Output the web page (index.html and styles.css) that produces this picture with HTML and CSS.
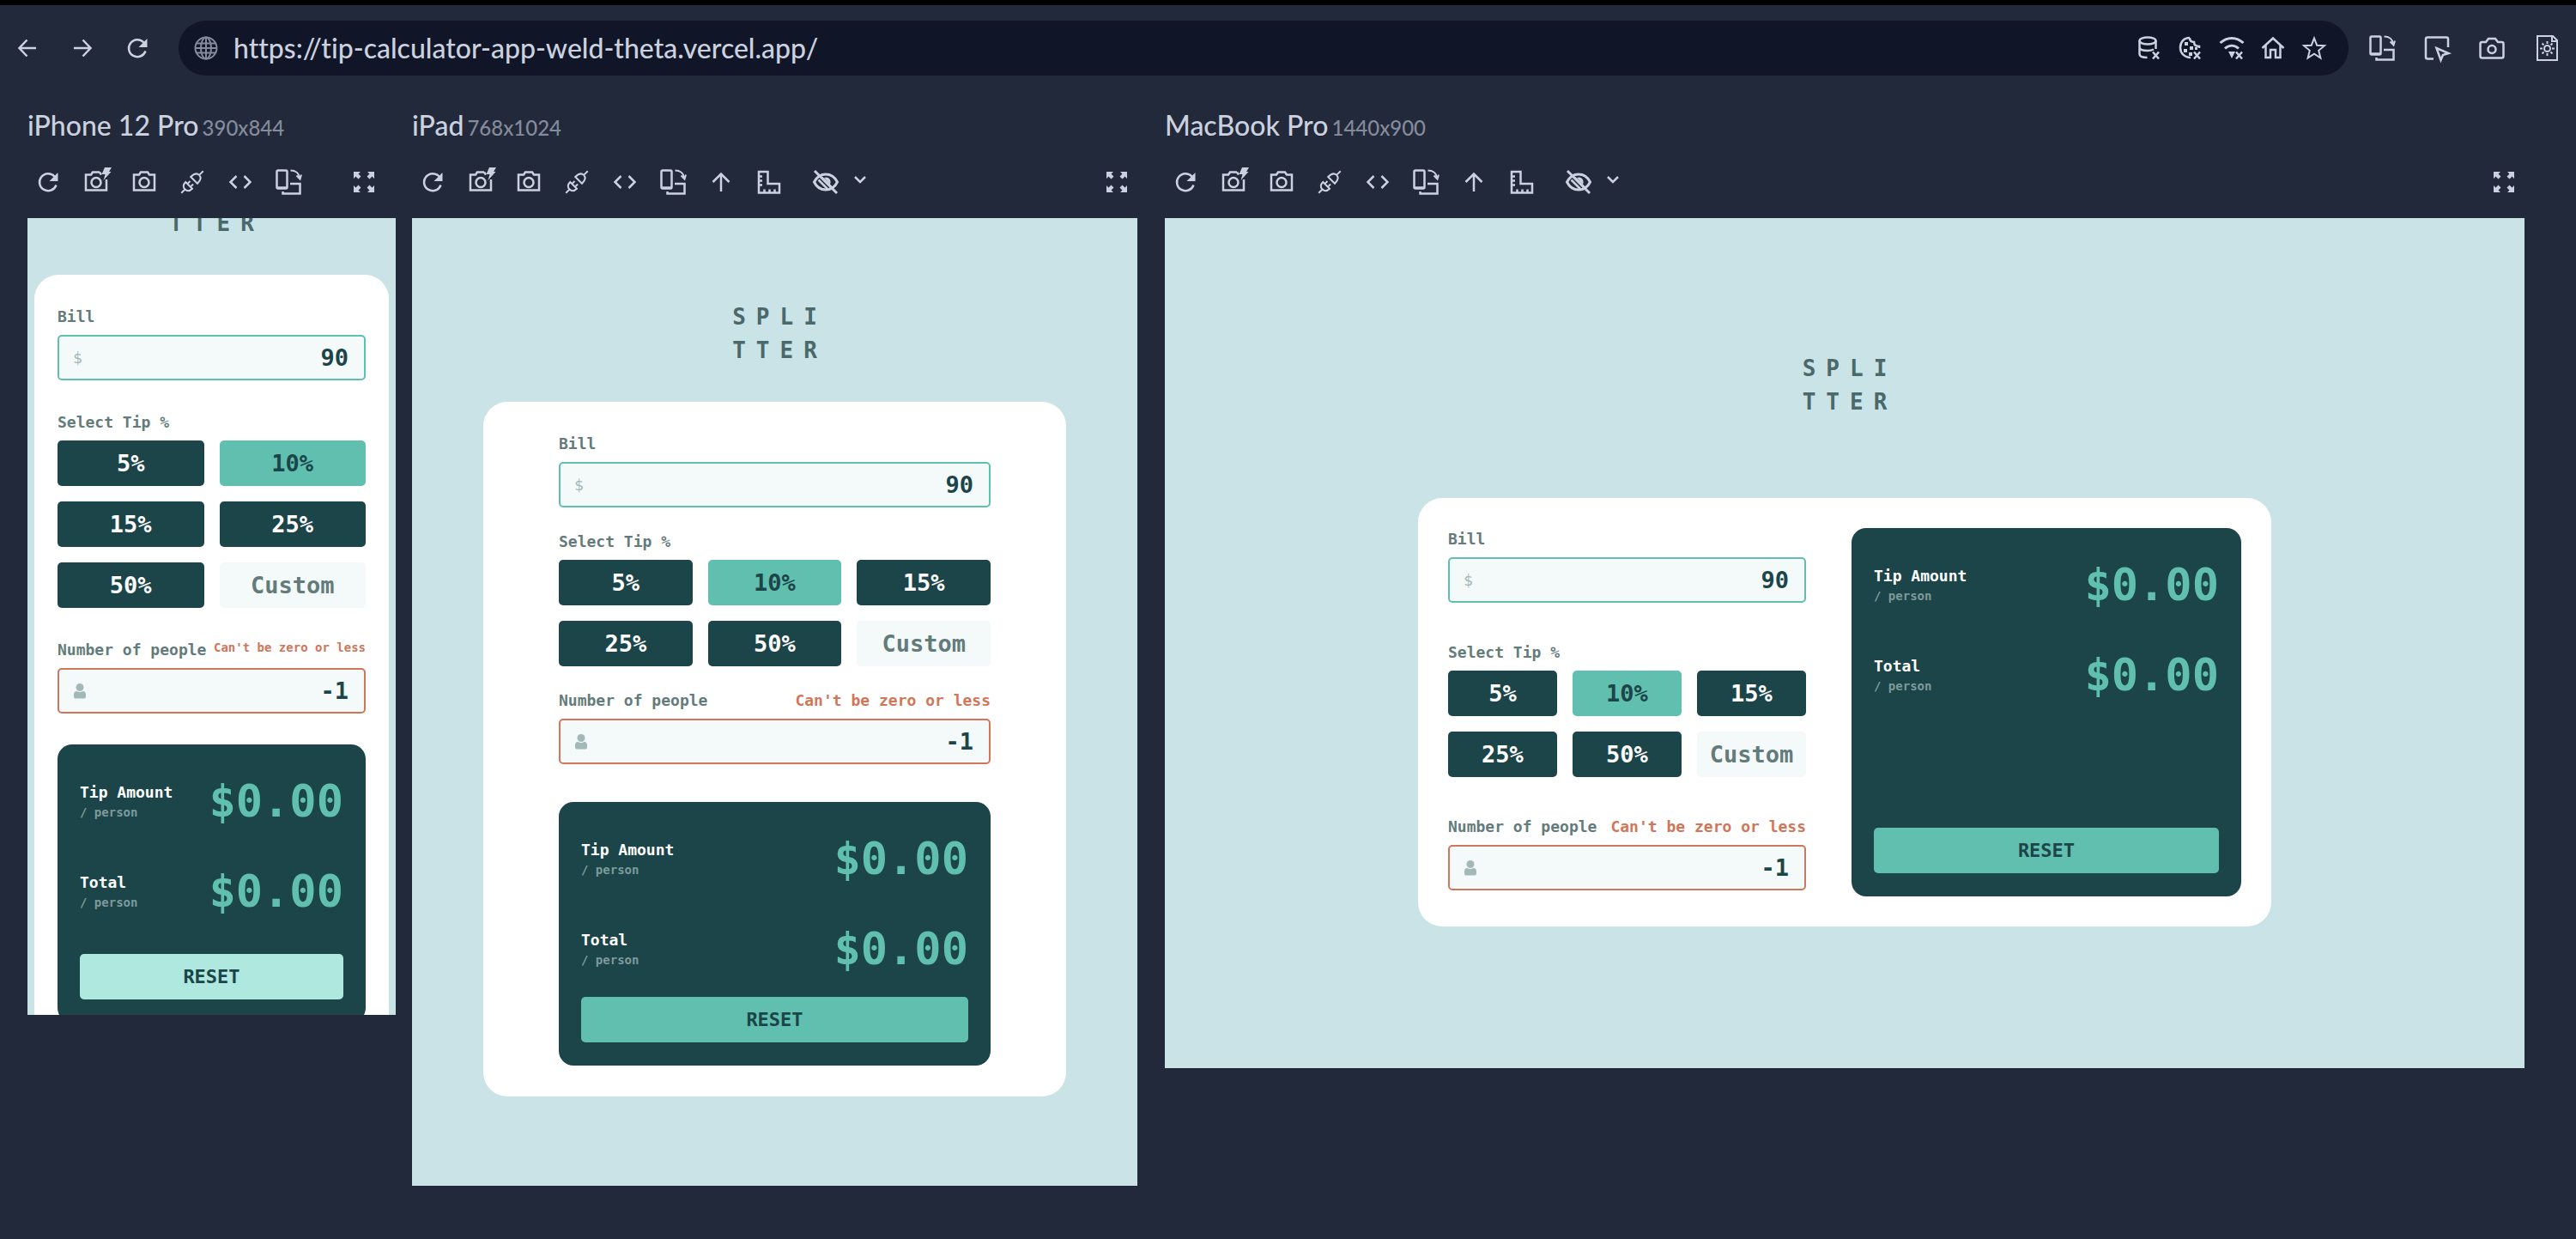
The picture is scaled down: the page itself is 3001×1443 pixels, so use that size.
FILE: index.html
```html
<!DOCTYPE html>
<html lang="en">
<head>
<meta charset="utf-8">
<meta name="viewport" content="width=device-width, initial-scale=1">
<title>Responsive preview</title>
<link rel="stylesheet" href="styles.css">
</head>
<body>
<svg class="sprite" aria-hidden="true">
  <symbol id="i-back" viewBox="0 0 32 32"><path d="M26 16H7M15.500 6.500 6.500 16l9 9.500"/></symbol>
  <symbol id="i-forward" viewBox="0 0 32 32"><path d="M6 16h19M16.500 6.500l9 9.500-9 9.500"/></symbol>
  <symbol id="i-up" viewBox="0 0 32 32"><path d="M16 27V7M6.500 16 16 6.500 25.500 16"/></symbol>
  <symbol id="i-refresh" viewBox="0 0 32 32"><path d="M25.500 19.500A10 10 0 1 1 23.500 9.500"/><path class="solid" d="M27.500 5v10h-10z"/></symbol>
  <symbol id="i-camera" viewBox="0 0 32 32"><path d="M4 7.500h6l2-3h8l2 3h6v18H4z"/><circle cx="16" cy="16.500" r="5.500"/></symbol>
  <symbol id="i-flash" viewBox="0 0 32 32"><path d="M20 4.500h-8l-2 3H4v18h24V13M20 4.500l2 3"/><circle cx="16" cy="16.500" r="5.500"/><path class="solid" d="M26-1h8l-3 5h2.500l-9 10 2-7h-4z"/></symbol>
  <symbol id="i-plug" viewBox="0 0 32 32"><g class="thin" transform="rotate(-45 16 16)"><path d="M-2 16h6M10.500 10.500c-4.500 0-6.500 2-6.500 5.500s2 5.500 6.500 5.500zM10.500 13.500H15M10.500 18.500H15M19 10.500v11c5 0 8.500-2 8.500-5.500s-3.500-5.500-8.500-5.500zM27.500 16H34"/></g></symbol>
  <symbol id="i-code" viewBox="0 0 32 32"><path d="M11.500 9 4.500 16l7 7M20.500 9l7 7-7 7"/></symbol>
  <symbol id="i-rotate" viewBox="0 0 32 32"><rect x="2.500" y="2.500" width="12" height="21" rx="1.500"/><path d="M2.500 22.500h12M18 18h11.500v11.500H9.500V27"/><path class="thin" d="M18.500 2.500c5.500 0 10 3 10.500 9M25.500 8.500l4 4 1.500-5"/></symbol>
  <symbol id="i-ruler" viewBox="0 0 32 32"><path d="M4 4h10.500v14H28v10.500H4zM4 9.500h4M4 14.500h4M4 19.500h4M10.500 28.500v-4M16.500 28.500v-4M22.500 28.500v-4"/></symbol>
  <symbol id="i-eye" viewBox="0 0 32 32"><path class="bold" d="M2.500 16c3-6 8-9 13.500-9s10.500 3 13.500 9c-3 6-8 9-13.500 9S5.500 22 2.500 16z"/><path class="solid" d="M14 11c5-2 9 2 7 8z"/><path d="M7.500 13.500 18 24M11 10.500l12 12"/><path class="bold" d="M3 3l26 26"/></symbol>
  <symbol id="i-chevron" viewBox="0 0 16 16"><path d="M2 2l6 6 6-6"/></symbol>
  <symbol id="i-expand" viewBox="0 0 32 32"><path class="solid" d="M4 4h8L9.500 6.500l3 3-3 3-3-3L4 12zM28 4h-8l2.500 2.500-3 3 3 3 3-3L28 12zM4 28h8l-2.500-2.500 3-3-3-3-3 3L4 20zM28 28h-8l2.500-2.500-3-3 3-3 3 3L28 20z"/></symbol>
  <symbol id="i-globe" viewBox="0 0 32 32"><g class="thin"><circle cx="16" cy="16" r="12.500"/><ellipse cx="16" cy="16" rx="6" ry="12.500"/><path d="M16 3.500v25M3.500 16h25M5 10.500h22M5 21.500h22"/></g></symbol>
  <symbol id="i-storage" viewBox="0 0 32 32"><ellipse cx="14" cy="7.500" rx="9.500" ry="4"/><path d="M4.500 7.500V23c0 2.500 4 4 9 4M23.500 7.500V17M4.500 15c0 2.500 4 4 9.500 4 3 0 5-.5 7-1.500"/><path d="M20 20.500l7 8M27 20.500l-7 8"/></symbol>
  <symbol id="i-cookie" viewBox="0 0 32 32"><path d="M15 4C8 4 4 9 4 15.500S9 27 16 27M15 4c0 4 2 5 5 5 0 3 2 5 6 5v2"/><path class="solid" d="M9 9h4v4H9zM8 17h4v4H8zM15 14h4v4h-4zM14 21h4v4h-4zM21 15h3v3h-3z"/><path d="M20 20.500l7 8M27 20.500l-7 8"/></symbol>
  <symbol id="i-wifi" viewBox="0 0 32 32"><path class="bold" d="M2.500 10c8-7.500 19-7.500 27 0M8 16.500c5-4.500 11-4.500 16 0"/><path class="solid" d="M12 20h8l-4 8z"/><path d="M21 20.500l7 8M28 20.500l-7 8"/></symbol>
  <symbol id="i-home" viewBox="0 0 32 32"><path d="M3.500 16 16 4.500 28.500 16M7.500 13v14H13v-9h6v9h5.500V13"/></symbol>
  <symbol id="i-star" viewBox="0 0 32 32"><path class="thin" d="M16 4.500l3.200 8.200 8.800.5-6.800 5.600 2.200 8.700-7.400-4.800-7.400 4.800 2.200-8.700L4 13.200l8.800-.5z"/></symbol>
  <symbol id="i-inspect" viewBox="0 0 32 32"><path d="M12 28.500H5c-1.500 0-2-.5-2-2V5.500c0-1.500.5-2 2-2h22c1.500 0 2 .5 2 2V15M15.500 16l5 14 2.500-6 6.500-2z"/></symbol>
  <symbol id="i-photo" viewBox="0 0 32 32"><path d="M4.500 9H9l3-4h8l3 4h4.500c1.500 0 2 .5 2 2v14.500c0 1.500-.5 2-2 2h-23c-1.500 0-2-.5-2-2V11c0-1.500.5-2 2-2z"/><circle cx="16" cy="17.500" r="4.500"/></symbol>
  <symbol id="i-report" viewBox="0 0 32 32"><g class="thin"><path d="M5 2h18l5 5v23H5zM22 2v6h6"/><circle cx="16.500" cy="16.500" r="3.500"/><path d="M16.500 8v3M16.500 22v3M8 16.500h3M22 16.500h3M10.500 10.500l2 2M20.500 20.500l2 2M10.500 22.500l2-2M20.500 12.500l2-2"/></g></symbol>
  <symbol id="i-person" viewBox="0 0 16 18"><circle class="solid" cx="8" cy="4.500" r="4.500"/><path class="solid" d="M1 15c-.5-5 1.500-6 3.500-6 2 1.500 5 1.500 7 0 2 0 4 1 3.500 6 0 2-1 2.500-2.500 2.500h-9C2 17.500 1 17 1 15z"/></symbol>
</svg>

<header class="browser-bar">
  <nav class="bar-group" aria-label="History">
    <button class="bar-button" aria-label="Back"><svg class="icon"><use href="#i-back"/></svg></button>
    <button class="bar-button" aria-label="Forward"><svg class="icon"><use href="#i-forward"/></svg></button>
    <button class="bar-button" aria-label="Reload"><svg class="icon"><use href="#i-refresh"/></svg></button>
  </nav>
  <div class="address">
    <svg class="icon address-globe"><use href="#i-globe"/></svg>
    <input class="address-input" type="text" aria-label="Address" value="https://tip-calculator-app-weld-theta.vercel.app/">
    <div class="address-actions">
      <button class="plain-button" aria-label="Clear storage"><svg class="icon"><use href="#i-storage"/></svg></button>
      <button class="plain-button" aria-label="Clear cookies"><svg class="icon"><use href="#i-cookie"/></svg></button>
      <button class="plain-button" aria-label="Clear cache"><svg class="icon"><use href="#i-wifi"/></svg></button>
      <button class="plain-button" aria-label="Home"><svg class="icon"><use href="#i-home"/></svg></button>
      <button class="plain-button" aria-label="Bookmark"><svg class="icon"><use href="#i-star"/></svg></button>
    </div>
  </div>
  <div class="bar-group">
    <button class="bar-button" aria-label="Rotate devices"><svg class="icon"><use href="#i-rotate"/></svg></button>
    <button class="bar-button" aria-label="Inspect"><svg class="icon"><use href="#i-inspect"/></svg></button>
    <button class="bar-button" aria-label="Screenshot all"><svg class="icon"><use href="#i-photo"/></svg></button>
    <button class="bar-button" aria-label="Settings"><svg class="icon"><use href="#i-report"/></svg></button>
  </div>
</header>

<main class="devices">
  <section class="device device-phone">
    <h2 class="device-name">iPhone 12 Pro <span class="device-size">390x844</span></h2>
    <div class="toolbar">
      <button class="tool" aria-label="Refresh"><svg class="icon"><use href="#i-refresh"/></svg></button>
      <button class="tool" aria-label="Quick screenshot"><svg class="icon"><use href="#i-flash"/></svg></button>
      <button class="tool" aria-label="Full screenshot"><svg class="icon"><use href="#i-camera"/></svg></button>
      <button class="tool" aria-label="Disable sync"><svg class="icon"><use href="#i-plug"/></svg></button>
      <button class="tool" aria-label="Devtools"><svg class="icon"><use href="#i-code"/></svg></button>
      <button class="tool" aria-label="Rotate"><svg class="icon"><use href="#i-rotate"/></svg></button>
      <button class="tool tool-end" aria-label="Expand"><svg class="icon"><use href="#i-expand"/></svg></button>
    </div>
    <div class="screen">
      <div class="app">
        <h1 class="logo">SPLI<br>TTER</h1>
        <form class="card">
          <div class="fields">
            <div class="field">
              <label class="label" for="bill-phone">Bill</label>
              <div class="box"><span class="currency">$</span><input class="value" id="bill-phone" type="text" value="90"></div>
            </div>
            <fieldset class="field tips">
              <legend class="label">Select Tip %</legend>
              <div class="tip-grid">
                <button class="tip" type="button">5%</button>
                <button class="tip tip-active" type="button">10%</button>
                <button class="tip" type="button">15%</button>
                <button class="tip" type="button">25%</button>
                <button class="tip" type="button">50%</button>
                <input class="tip tip-custom" type="text" placeholder="Custom" aria-label="Custom tip">
              </div>
            </fieldset>
            <div class="field">
              <div class="label-row"><label class="label" for="people-phone">Number of people</label><span class="error">Can't be zero or less</span></div>
              <div class="box box-error"><svg class="person"><use href="#i-person"/></svg><input class="value" id="people-phone" type="text" value="-1"></div>
            </div>
          </div>
          <div class="result">
            <div class="row"><div><div class="row-name">Tip Amount</div><div class="row-unit">/ person</div></div><output class="amount">$0.00</output></div>
            <div class="row"><div><div class="row-name">Total</div><div class="row-unit">/ person</div></div><output class="amount">$0.00</output></div>
            <button class="reset" type="button">RESET</button>
          </div>
        </form>
      </div>
    </div>
  </section>

  <section class="device device-tablet">
    <h2 class="device-name">iPad <span class="device-size">768x1024</span></h2>
    <div class="toolbar">
      <button class="tool" aria-label="Refresh"><svg class="icon"><use href="#i-refresh"/></svg></button>
      <button class="tool" aria-label="Quick screenshot"><svg class="icon"><use href="#i-flash"/></svg></button>
      <button class="tool" aria-label="Full screenshot"><svg class="icon"><use href="#i-camera"/></svg></button>
      <button class="tool" aria-label="Disable sync"><svg class="icon"><use href="#i-plug"/></svg></button>
      <button class="tool" aria-label="Devtools"><svg class="icon"><use href="#i-code"/></svg></button>
      <button class="tool" aria-label="Rotate"><svg class="icon"><use href="#i-rotate"/></svg></button>
      <button class="tool" aria-label="Scroll to top"><svg class="icon"><use href="#i-up"/></svg></button>
      <button class="tool" aria-label="Rulers"><svg class="icon"><use href="#i-ruler"/></svg></button>
      <button class="tool tool-menu" aria-label="Simulate vision"><svg class="icon"><use href="#i-eye"/></svg><svg class="chevron"><use href="#i-chevron"/></svg></button>
      <button class="tool tool-end" aria-label="Expand"><svg class="icon"><use href="#i-expand"/></svg></button>
    </div>
    <div class="screen">
      <div class="app">
        <h1 class="logo">SPLI<br>TTER</h1>
        <form class="card">
          <div class="fields">
            <div class="field">
              <label class="label" for="bill-tablet">Bill</label>
              <div class="box"><span class="currency">$</span><input class="value" id="bill-tablet" type="text" value="90"></div>
            </div>
            <fieldset class="field tips">
              <legend class="label">Select Tip %</legend>
              <div class="tip-grid">
                <button class="tip" type="button">5%</button>
                <button class="tip tip-active" type="button">10%</button>
                <button class="tip" type="button">15%</button>
                <button class="tip" type="button">25%</button>
                <button class="tip" type="button">50%</button>
                <input class="tip tip-custom" type="text" placeholder="Custom" aria-label="Custom tip">
              </div>
            </fieldset>
            <div class="field">
              <div class="label-row"><label class="label" for="people-tablet">Number of people</label><span class="error">Can't be zero or less</span></div>
              <div class="box box-error"><svg class="person"><use href="#i-person"/></svg><input class="value" id="people-tablet" type="text" value="-1"></div>
            </div>
          </div>
          <div class="result">
            <div class="row"><div><div class="row-name">Tip Amount</div><div class="row-unit">/ person</div></div><output class="amount">$0.00</output></div>
            <div class="row"><div><div class="row-name">Total</div><div class="row-unit">/ person</div></div><output class="amount">$0.00</output></div>
            <button class="reset" type="button">RESET</button>
          </div>
        </form>
      </div>
    </div>
  </section>

  <section class="device device-laptop">
    <h2 class="device-name">MacBook Pro <span class="device-size">1440x900</span></h2>
    <div class="toolbar">
      <button class="tool" aria-label="Refresh"><svg class="icon"><use href="#i-refresh"/></svg></button>
      <button class="tool" aria-label="Quick screenshot"><svg class="icon"><use href="#i-flash"/></svg></button>
      <button class="tool" aria-label="Full screenshot"><svg class="icon"><use href="#i-camera"/></svg></button>
      <button class="tool" aria-label="Disable sync"><svg class="icon"><use href="#i-plug"/></svg></button>
      <button class="tool" aria-label="Devtools"><svg class="icon"><use href="#i-code"/></svg></button>
      <button class="tool" aria-label="Rotate"><svg class="icon"><use href="#i-rotate"/></svg></button>
      <button class="tool" aria-label="Scroll to top"><svg class="icon"><use href="#i-up"/></svg></button>
      <button class="tool" aria-label="Rulers"><svg class="icon"><use href="#i-ruler"/></svg></button>
      <button class="tool tool-menu" aria-label="Simulate vision"><svg class="icon"><use href="#i-eye"/></svg><svg class="chevron"><use href="#i-chevron"/></svg></button>
      <button class="tool tool-end" aria-label="Expand"><svg class="icon"><use href="#i-expand"/></svg></button>
    </div>
    <div class="screen">
      <div class="app">
        <h1 class="logo">SPLI<br>TTER</h1>
        <form class="card">
          <div class="fields">
            <div class="field">
              <label class="label" for="bill-laptop">Bill</label>
              <div class="box"><span class="currency">$</span><input class="value" id="bill-laptop" type="text" value="90"></div>
            </div>
            <fieldset class="field tips">
              <legend class="label">Select Tip %</legend>
              <div class="tip-grid">
                <button class="tip" type="button">5%</button>
                <button class="tip tip-active" type="button">10%</button>
                <button class="tip" type="button">15%</button>
                <button class="tip" type="button">25%</button>
                <button class="tip" type="button">50%</button>
                <input class="tip tip-custom" type="text" placeholder="Custom" aria-label="Custom tip">
              </div>
            </fieldset>
            <div class="field">
              <div class="label-row"><label class="label" for="people-laptop">Number of people</label><span class="error">Can't be zero or less</span></div>
              <div class="box box-error"><svg class="person"><use href="#i-person"/></svg><input class="value" id="people-laptop" type="text" value="-1"></div>
            </div>
          </div>
          <div class="result">
            <div class="row"><div><div class="row-name">Tip Amount</div><div class="row-unit">/ person</div></div><output class="amount">$0.00</output></div>
            <div class="row"><div><div class="row-name">Total</div><div class="row-unit">/ person</div></div><output class="amount">$0.00</output></div>
            <button class="reset" type="button">RESET</button>
          </div>
        </form>
      </div>
    </div>
  </section>
</main>
</body>
</html>
```
FILE: styles.css
```css
:root {
  --page: #22293b;
  --ink: #cbd1df;
  --muted: #848b9b;
  --dark: #1c4549;
  --teal: #60bfae;
  --mint: #aee8df;
  --label: #637c7b;
  --error: #d0765a;
  --field: #f4f9fa;
  --screen: #cae3e6;
}

* { box-sizing: border-box; }

body {
  margin: 0;
  min-height: 100vh;
  border-top: 6px solid #000;
  background: var(--page);
  color: var(--ink);
  font-family: Lato, sans-serif;
  font-weight: 500;
}

button, input, output { font: inherit; color: inherit; }
button { padding: 0; border: 0; background: none; cursor: pointer; }
input { min-width: 0; border: 0; outline: 0; background: none; }

.sprite { display: none; }

.icon {
  flex: none;
  width: 32px;
  height: 32px;
  overflow: visible;
}
.icon, .chevron {
  fill: none;
  stroke: currentColor;
  stroke-width: 2.5;
}
symbol { overflow: visible; }
.thin { stroke-width: 2; }
.bold { stroke-width: 3; }
.solid { fill: currentColor; stroke: none; }

/* Browser bar */
.browser-bar {
  display: flex;
  align-items: center;
  padding: 18px 2px 18px 0;
}
.bar-group { display: flex; flex: none; }
.bar-button {
  display: flex;
  align-items: center;
  justify-content: center;
  width: 64px;
  height: 64px;
}
.address {
  display: flex;
  flex: 1;
  align-items: center;
  height: 64px;
  margin: 0 7px 0 16px;
  padding: 0 24px 0 16px;
  border-radius: 32px;
  background: #101628;
}
.address-globe { color: var(--muted); }
.address-input {
  flex: 1;
  padding: 0 16px;
  font-size: 32px;
  line-height: 40px;
  font-variant-ligatures: none;
}
.address-actions { display: flex; gap: 16px; }
.plain-button { display: flex; }

/* Device previews */
.devices {
  display: flex;
  align-items: flex-start;
  padding: 20px 60px 60px 32px;
}
.device { min-width: 0; }
.device-phone { flex: 429 1 0; margin-right: 19px; }
.device-tablet { flex: 845 1 0; margin-right: 32px; }
.device-laptop { flex: 1584 1 0; }
.device-name {
  margin: 0;
  font-size: 32px;
  font-weight: 500;
  line-height: 40px;
  white-space: nowrap;
}
.device-size {
  margin-left: -4px;
  color: var(--muted);
  font-size: 24px;
}
.toolbar {
  display: flex;
  gap: 8px;
  margin: 19px 0 18px;
}
.tool {
  display: flex;
  flex: none;
  align-items: center;
  justify-content: center;
  width: 48px;
  height: 48px;
}
.tool-menu { gap: 16px; width: 100px; }
.chevron { width: 16px; height: 16px; }
.tool-end { margin-left: auto; }
.device-phone .toolbar { padding-right: 13px; }

.screen {
  overflow: hidden;
  background: var(--screen);
  font-family: "DejaVu Sans Mono", "Liberation Mono", monospace;
  font-weight: 700;
}
.device-phone .screen { aspect-ratio: 390 / 844; }
.device-tablet .screen { aspect-ratio: 768 / 1024; }
.device-laptop .screen { aspect-ratio: 1440 / 900; }

/* Tip calculator */
.app { padding: 96px 83px; }
.device-phone .app { margin-top: -52px; padding: 0 8px; }
.device-laptop .app { padding: 156px 295px; }

.logo {
  margin: 0 0 40px;
  padding-left: 12px;
  color: #4b686b;
  font-size: 26px;
  line-height: 39px;
  letter-spacing: 12px;
  text-align: center;
}
.device-laptop .logo { margin-bottom: 92px; }

.card {
  display: grid;
  grid-template-columns: minmax(0, 1fr);
  gap: 44px;
  padding: 36px 88px;
  border-radius: 28px;
  background: #fff;
}
.device-phone .card { gap: 36px; padding: 36px 27px; }
.device-laptop .card {
  grid-template-columns: 417fr 454fr;
  gap: 53px;
  padding: 35px;
}

.fields {
  display: grid;
  grid-template-columns: minmax(0, 1fr);
  align-content: start;
  gap: 27px;
  min-width: 0;
}
.device-phone .fields { gap: 36px; }
.device-laptop .fields { gap: 45px; padding-bottom: 7px; }
.field {
  display: grid;
  grid-template-columns: minmax(0, 1fr);
  gap: 8px;
  min-width: 0;
  margin: 0;
  padding: 0;
  border: 0;
}
.tips { display: block; }
.label, .error {
  display: block;
  padding: 0;
  color: var(--label);
  font-size: 18px;
  line-height: 26px;
  white-space: nowrap;
}
.tips .label { margin-bottom: 8px; }
.label-row { display: flex; justify-content: space-between; }
.error { color: var(--error); }
.device-phone .error { font-size: 14px; line-height: 21px; }

.box {
  display: flex;
  align-items: center;
  height: 53px;
  padding: 0 18px 0 16px;
  border: 2px solid var(--teal);
  border-radius: 5px;
  background: var(--field);
}
.box-error { border-color: var(--error); }
.currency { color: #a3b9b8; font-size: 18px; font-weight: 400; }
.person { flex: none; width: 16px; height: 18px; color: #a3b9b8; }
.value {
  flex: 1;
  padding: 0;
  color: var(--dark);
  font-size: 27px;
  text-align: right;
}

.tip-grid {
  display: grid;
  grid-template-columns: repeat(3, minmax(0, 1fr));
  gap: 18px;
}
.device-phone .tip-grid { grid-template-columns: repeat(2, minmax(0, 1fr)); }
.tip, .reset {
  height: 53px;
  border-radius: 5px;
  text-align: center;
}
.tip { background: var(--dark); color: #fff; font-size: 27px; }
.tip-active { background: var(--teal); color: var(--dark); }
.tip-custom { width: 100%; padding: 0; background: var(--field); color: var(--dark); }
.tip-custom::placeholder { color: var(--label); opacity: 1; }

.result {
  display: flex;
  flex-direction: column;
  padding: 27px 26px;
  border-radius: 17px;
  background: var(--dark);
}
.row {
  display: flex;
  align-items: center;
  justify-content: space-between;
  margin-bottom: 27px;
}
.row-name { color: #fff; font-size: 18px; line-height: 26px; }
.row-unit { color: #7c9a9b; font-size: 14px; line-height: 21px; }
.amount { color: var(--teal); font-size: 52px; line-height: 78px; }
.reset {
  margin-top: auto;
  background: var(--teal);
  color: var(--dark);
  font-size: 22px;
}
.device-phone .reset { margin-top: 7px; background: var(--mint); }
.device-tablet .row + .row { margin-bottom: 17px; }
```
